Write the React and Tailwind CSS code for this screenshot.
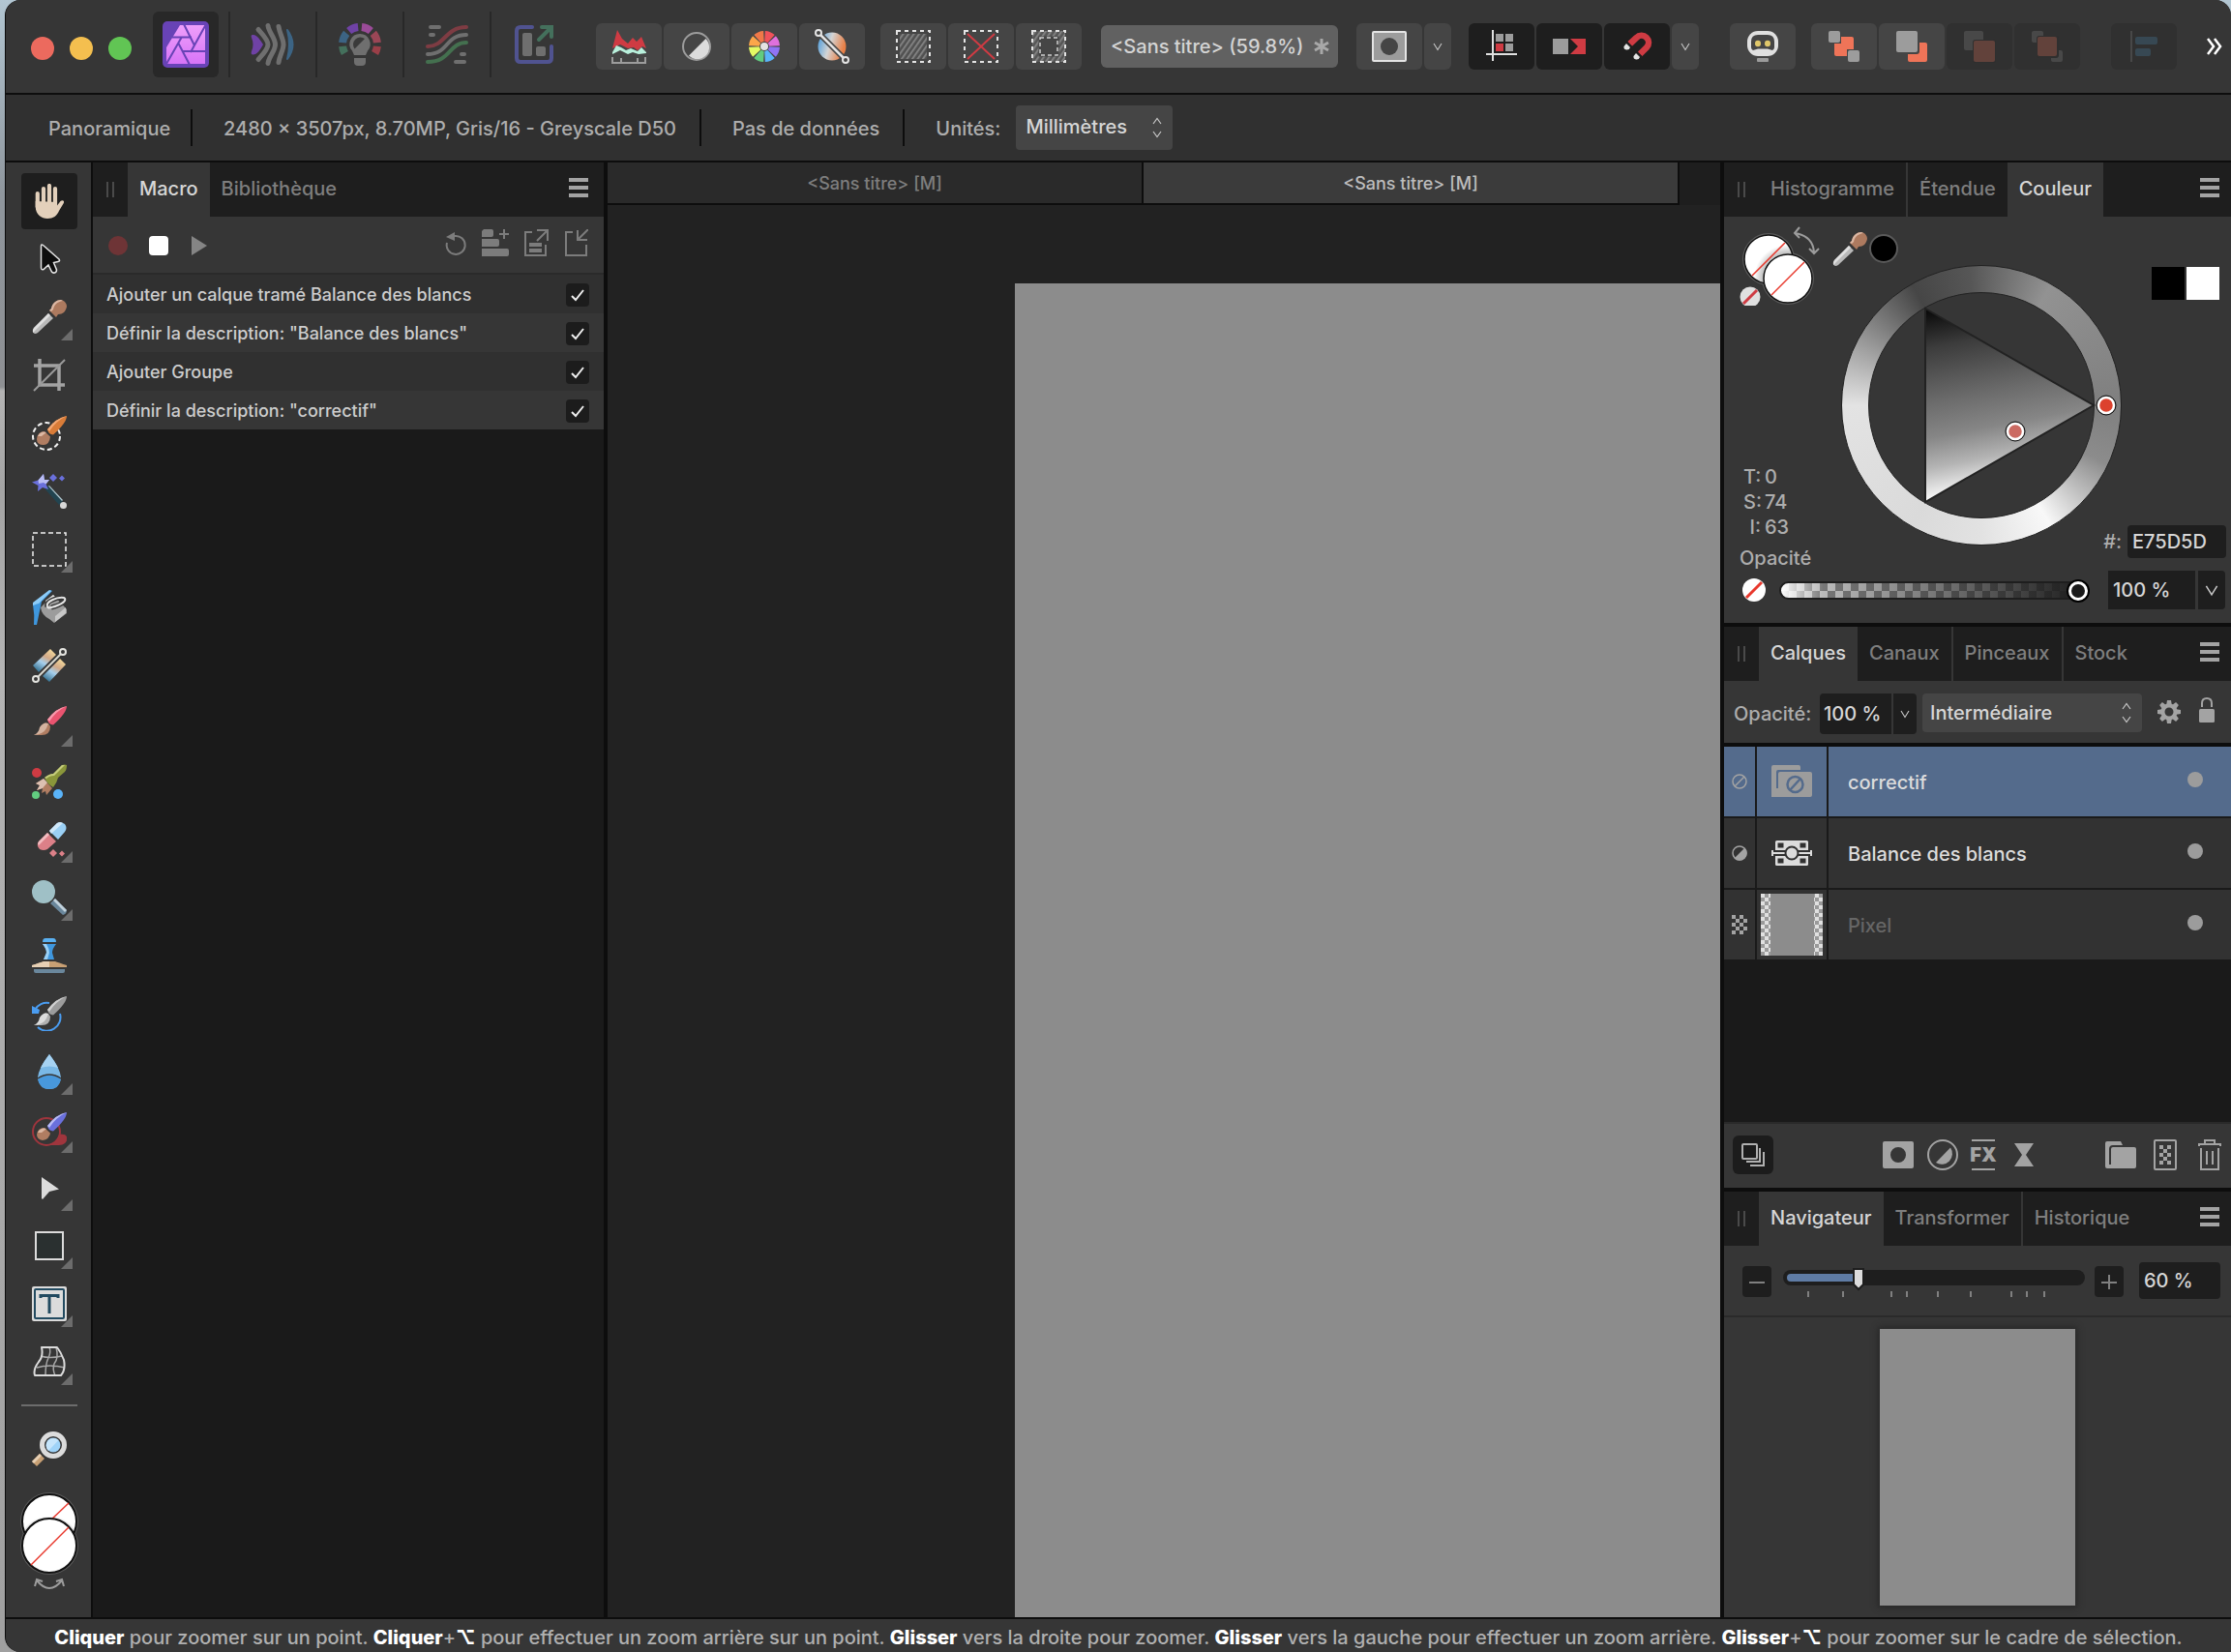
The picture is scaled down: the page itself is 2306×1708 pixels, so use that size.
import React from "react";

const Svg = ({ w = 36, h = w, children, className = "" }) => (
  <svg width={w} height={h} viewBox={`0 0 ${w} ${h}`} fill="none" className={`shrink-0 ${className}`} aria-hidden="true">
    {children}
  </svg>
);

/* ---------- persona icons ---------- */

const PhotoLogo = () => (
  <Svg w={48}>
    <defs>
      <linearGradient id="pink" x1="0" y1="0" x2="0" y2="1">
        <stop offset="0" stopColor="#ee9ffa" />
        <stop offset="1" stopColor="#d774f7" />
      </linearGradient>
    </defs>
    <rect width="48" height="48" rx="5" fill="#6843b6" />
    <path d="M18 4H44V44H4V27Z" fill="url(#pink)" />
    <g stroke="#6843b6" strokeWidth="2">
      <path d="M10 16.500H30M22 3L33 25M45 3L29 32M45 31H20M28 45L16 22M4 44L20 16" />
    </g>
  </Svg>
);

const LiquifyIcon = () => (
  <Svg w={46} h={44}>
    <path d="M2 12C6 11 10 17 13 22C10 28 6 33 2 32.500Q0 32 1 29C3 24 3 20 1 15Q0 12 2 12Z" fill="#6f42a5" />
    <g stroke="#6f6f6f" strokeWidth="5" strokeLinecap="round" strokeLinejoin="round">
      <path d="M8 6.500C12 11 18 17 18 22S12 33 8 37.500" />
      <path d="M18 2.500C19 10 25.500 15 25.500 22S19 34 18 41.500" />
      <path d="M29 3.500C30 11 34 16 34 22S30 33 29 40.500" />
    </g>
    <path d="M38 7Q49 22 38 37Q42 22 38 7Z" fill="#3c6484" stroke="#3c6484" strokeWidth="2" strokeLinejoin="round" />
  </Svg>
);

const arc = (cx, cy, r, a, b) => {
  const p = (t) => [cx + r * Math.cos((t * Math.PI) / 180), cy + r * Math.sin((t * Math.PI) / 180)].map((n) => n.toFixed(2)).join(" ");
  return `M${p(a)}A${r} ${r} 0 0 1 ${p(b)}`;
};

const DevelopIcon = () => (
  <Svg w={46} h={46}>
    {[
      ["#44705c", 150, 174],
      ["#3c6484", 186, 220],
      ["#6f42a5", 231, 264],
      ["#9a4b98", 276, 309],
      ["#9a4656", 320, 354],
      ["#9a3f48", 366, 390],
    ].map(([c, a, b]) => (
      <path key={a} d={arc(23, 23, 18, a, b)} stroke={c} strokeWidth="8" />
    ))}
    <path d="M23 12A10.500 10.500 0 0 0 15 29.500L17 34H29L31 29.500A10.500 10.500 0 0 0 23 12Z" fill="#6f6f6f" />
    <path d="M17.500 27.500A7.500 7.500 0 0 1 28 17Z" fill="#3a3a3a" />
    <path d="M17 37H29V41Q29 45 25 45H21Q17 45 17 41Z" fill="#6f6f6f" />
  </Svg>
);

const ToneIcon = () => (
  <Svg w={44} h={44}>
    <g strokeWidth="4" strokeLinecap="round">
      <path d="M2 24C20 24 20 4 42 4" stroke="#7e3c43" />
      <path d="M2 32C24 32 20 12 42 12" stroke="#6f6f6f" />
      <path d="M2 40C26 40 24 20 42 20" stroke="#44704f" />
      <path d="M5 4H14M5 12H8M37 32H40M31 40H40" stroke="#6f6f6f" />
    </g>
  </Svg>
);

const ExportIcon = () => (
  <Svg w={44} h={44}>
    <path d="M20 4H8Q4 4 4 8V36Q4 40 8 40H36Q40 40 40 36V24" stroke="#505390" strokeWidth="4" strokeLinecap="round" />
    <rect x="10" y="10" width="10" height="24" rx="2" fill="#6f6f6f" />
    <rect x="24" y="24" width="10" height="10" rx="2" fill="#6f6f6f" />
    <path d="M27 17L39 5M30 4H40V14" stroke="#44705c" strokeWidth="4" strokeLinecap="round" />
  </Svg>
);

/* ---------- main toolbar icons ---------- */

const LevelsIcon = () => (
  <Svg w={36} h={36}>
    <path d="M1 20L6 1L11 10L17 15L22 9L26 13L31 8L36 20L32 18L27 22L23 19L17 20L9 16L5 18Z" fill="#cf3b43" />
    <path d="M1 24L5 17L10 19L15 22L20 20L27 23L31 19L36 24V25L28 26L22 24L17 26L9 22L1 26Z" fill="#b9f0dc" />
    <path d="M1 29V35H35V29M10 30V34M27 30V34" stroke="#9c9c9c" strokeWidth="2" />
  </Svg>
);
const ContrastIcon = () => (
  <Svg w={32} h={32}>
    <circle cx="16" cy="16" r="14" stroke="#9c9c9c" strokeWidth="2" />
    <path d="M25.500 8A11.500 11.500 0 0 1 8 25.500Z" fill="#dcdcdc" />
  </Svg>
);
const wheelColors = ["#f0525a", "#e070dc", "#8f74f5", "#5ab4fa", "#62cc80", "#e4fa64", "#fca64a", "#f07848"];
const ColorsIcon = () => (
  <Svg w={34} h={34}>
    {wheelColors.map((c, i) => (
      <path key={c} d={arc(17, 17, 10, -90 + i * 45 + 3, -90 + i * 45 + 42)} stroke={c} strokeWidth="12" />
    ))}
    <circle cx="17" cy="17" r="5" fill="#454545" />
    <circle cx="17" cy="17" r="4" fill="#e4e4e4" />
  </Svg>
);
const BalanceIcon = () => (
  <Svg w={38} h={38}>
    <defs>
      <linearGradient id="bal" x1="0" y1="0" x2="1" y2="0.300">
        <stop offset="0" stopColor="#3f97de" />
        <stop offset="0.500" stopColor="#d4d4d4" />
        <stop offset="1" stopColor="#e87f45" />
      </linearGradient>
    </defs>
    <circle cx="19" cy="19" r="14.500" fill="url(#bal)" />
    <path d="M4 4L34 34" stroke="#454545" strokeWidth="6" />
    <path d="M6 6L32 32" stroke="#e4e4e4" strokeWidth="2.500" />
    <circle cx="5" cy="5" r="3" stroke="#e4e4e4" strokeWidth="2" fill="#454545" />
    <circle cx="33" cy="33" r="3" stroke="#e4e4e4" strokeWidth="2" fill="#454545" />
  </Svg>
);
const hatch = (id, c) => (
  <pattern id={id} width="4.500" height="4.500" patternUnits="userSpaceOnUse" patternTransform="rotate(35)">
    <rect width="2" height="5" fill={c} />
  </pattern>
);
const SelectAllIcon = () => (
  <Svg w={38} h={36}>
    <defs>{hatch("h1", "#808080")}</defs>
    <rect x="2" y="2" width="34" height="32" stroke="#e4e4e4" strokeWidth="2" strokeDasharray="4 4" />
    <rect x="5" y="5" width="28" height="26" fill="#505050" />
    <rect x="5" y="5" width="28" height="26" fill="url(#h1)" />
  </Svg>
);
const DeselectIcon = () => (
  <Svg w={38} h={36}>
    <rect x="2" y="2" width="34" height="32" stroke="#e4e4e4" strokeWidth="2" strokeDasharray="4 4" />
    <path d="M5 5L33 31M33 5L5 31" stroke="#cf3b43" strokeWidth="2" />
  </Svg>
);
const InvertSelIcon = () => (
  <Svg w={38} h={36}>
    <defs>{hatch("h2", "#808080")}</defs>
    <path d="M2 2H36V34H2Z" fill="#565656" />
    <path d="M2 2H36V34H2Z" fill="url(#h2)" />
    <rect x="2" y="2" width="34" height="32" stroke="#e4e4e4" strokeWidth="2" strokeDasharray="4 4" />
    <rect x="10" y="9" width="18" height="18" fill="#454545" stroke="#454545" strokeWidth="3" />
    <rect x="10" y="9" width="18" height="18" stroke="#d0d0d0" strokeWidth="1.500" strokeDasharray="4 3" />
  </Svg>
);
const QuickMaskIcon = () => (
  <Svg w={36} h={34}>
    <rect x="1" y="2" width="34" height="30" rx="1" fill="#9c9c9c" stroke="#e4e4e4" strokeWidth="2" />
    <circle cx="18" cy="17" r="9" fill="#454545" />
  </Svg>
);
const GridSnapIcon = () => (
  <Svg w={34} h={34}>
    <path d="M8 0V32M1 25H33" stroke="#e0e0e0" strokeWidth="2" />
    <path d="M11 4H19V12H11ZM21 4H29V12H21ZM21 14H29V22H21Z" fill="#9c9c9c" />
    <path d="M11 14H19V22H11Z" fill="#cf3b43" />
  </Svg>
);
const SnapPixelIcon = () => (
  <Svg w={34} h={20}>
    <rect x="0" y="2" width="16" height="16" fill="#9c9c9c" />
    <path d="M18 2H34V18H18L26 10Z" fill="#cf3b43" />
  </Svg>
);
const MagnetIcon = () => (
  <Svg w={34} h={34}>
    <path d="M9 15L16.500 8A7 7 0 0 1 27 18L19 26" stroke="#cf3b43" strokeWidth="6.500" />
    <path d="M6 12L12 18M16 22L22 28" stroke="#1e1e1e" strokeWidth="2" />
    <path d="M6 14L10 18Q9 21 6 20.500Q3 20 3.500 17ZM16 24L20 28Q19 31 16 30.500Q13 30 13.500 27Z" fill="#e4e4e4" />
  </Svg>
);
const BotIcon = () => (
  <Svg w={34} h={34}>
    <rect x="1" y="1" width="32" height="26" rx="11" fill="#e0e0e0" />
    <path d="M12 5H22Q29 5 29 12V18Q29 20 27 21L22 19.500H12L7 21Q5 20 5 18V12Q5 5 12 5Z" fill="#454545" />
    <ellipse cx="12" cy="14" rx="3" ry="3.200" fill="#e0c76a" />
    <ellipse cx="22" cy="14" rx="3" ry="3.200" fill="#e0c76a" />
    <rect x="11" y="29" width="12" height="4" rx="1" fill="#9c9c9c" />
  </Svg>
);
const ToBackIcon = () => (
  <Svg w={34} h={34}>
    <rect x="7" y="7" width="20" height="20" rx="2" fill="#ef7458" />
    <path d="M0 0H14V14H0ZM20 20H34V34H20Z" fill="#454545" />
    <rect x="1" y="1" width="12" height="12" rx="2" fill="#9c9c9c" />
    <rect x="21" y="21" width="12" height="12" rx="2" fill="#9c9c9c" />
  </Svg>
);
const BackwardIcon = () => (
  <Svg w={34} h={34}>
    <rect x="13" y="13" width="20" height="20" rx="2" fill="#ef7458" />
    <rect x="0" y="0" width="25" height="25" rx="3" fill="#454545" />
    <rect x="1" y="1" width="22" height="22" rx="2" fill="#9c9c9c" />
  </Svg>
);
const ForwardIcon = () => (
  <Svg w={34} h={34}>
    <rect x="1" y="1" width="20" height="20" rx="2" fill="#484848" />
    <rect x="10" y="10" width="24" height="24" rx="3" fill="#2f2f2f" />
    <rect x="11" y="11" width="22" height="22" rx="2" fill="#62423b" />
  </Svg>
);
const ToFrontIcon = () => (
  <Svg w={34} h={34}>
    <rect x="1" y="1" width="12" height="12" rx="2" fill="#484848" />
    <rect x="21" y="21" width="12" height="12" rx="2" fill="#484848" />
    <rect x="6" y="6" width="23" height="23" rx="3" fill="#2f2f2f" />
    <rect x="7" y="7" width="20" height="20" rx="2" fill="#62423b" />
  </Svg>
);
const AlignIcon = () => (
  <Svg w={34} h={34}>
    <path d="M4 1V33" stroke="#484848" strokeWidth="2" />
    <rect x="8" y="7" width="23" height="8" rx="2" fill="#374853" />
    <rect x="8" y="19" width="16" height="8" rx="2" fill="#374853" />
  </Svg>
);
const Down = ({ c = "#c8c8c8", w = 10 }) => (
  <svg width={w} height={w} viewBox="0 0 10 10" fill="none" aria-hidden="true">
    <path d="M1 2L5 8.500L9 2" stroke={c} strokeWidth="1.100" />
  </svg>
);
const UpDown = () => (
  <svg width="12" height="22" viewBox="0 0 12 22" fill="none" aria-hidden="true" className="pointer-events-none absolute top-1/2 right-2.5 -translate-y-1/2">
    <path d="M2 7L6 1.500L10 7M2 15L6 20.500L10 15" stroke="#c8c8c8" strokeWidth="1.200" />
  </svg>
);

/* ---------- tool icons, 36 x 36 ---------- */

const HandIcon = () => (
  <Svg>
    <g stroke="#e3d0bb" strokeWidth="4.200" strokeLinecap="round">
      <path d="M5.800 10V24M12 5V24M18 2V24M24 5V24" />
    </g>
    <path d="M3.700 18V24C4 32 10 36 16 36C22 36 26 33 28 28L32.800 20C34 17.500 31.500 16.500 29.500 18L26 22.500V19Z" fill="#e3d0bb" />
  </Svg>
);
const MoveIcon = () => (
  <Svg>
    <path d="M9.500 4.500Q9.500 2 11.500 3.500L28 18Q29.500 20 27 20.500L22.500 21.500L25.500 29Q25.500 31.500 23.500 32Q21.500 32.500 20.500 31L17 24L12 28.500Q9.500 29.500 9.500 26.500Z" fill="#0d0d0d" stroke="#e4e4e4" strokeWidth="1.500" />
  </Svg>
);
const Dropper = ({ s = 36 }) => (
  <svg width={s} height={s} viewBox="0 0 36 36" fill="none" aria-hidden="true">
    <path d="M17 14L22 19L6 34Q3 36 1.500 34Q0 32 2 29Z" fill="#b9b9b9" />
    <path d="M17 14L19 16L3 32L1.500 34Q0 32 2 29Z" fill="#e0e0e0" />
    <path d="M18 11L20 9C21 3 26 0 30 0C34 1 36 4 36 7C35 12 32 15 27 15L25 18Z" fill="#ad7a5f" />
    <path d="M18 11L20 9C21 3 26 0 30 0L32 1C26 2 23 5 22 10L20 12Z" fill="#dcb8a4" />
  </svg>
);
const CropIcon = () => (
  <Svg>
    <path d="M8 1V28H34M2 8H28V34" stroke="#a3a3a3" strokeWidth="3.500" />
    <path d="M2 34L34 2" stroke="#9a9a9a" strokeWidth="2" />
  </Svg>
);
const Handle = ({ a, b }) => (
  <>
    <path d="M16 14Q25 2 36 0Q36 7 22 19.500Q17 19 16 14Z" fill={a} />
    <path d="M16 14Q25 2 36 0Q25 5 18 16Z" fill={b} />
  </>
);
const SelBrushIcon = () => (
  <Svg>
    <circle cx="15" cy="21" r="14" stroke="#f0f0f0" strokeWidth="2" strokeDasharray="5 3" />
    <path d="M13 16L19 21.500Q18 30 12 30Q5 30 5 24Q6 16 13 16Z" fill="#b07d62" />
    <path d="M6 21Q9 15 15 17L10 21Z" fill="#dcb8a4" />
    <Handle a="#d97c38" b="#f3a873" />
  </Svg>
);
const WandIcon = () => (
  <Svg>
    <path d="M13 15L17 12L32 28L28 32Z" fill="#224450" />
    <path d="M17 12.500L18 12L32 27L31 28Z" fill="#b0c8d0" />
    <circle cx="32.500" cy="32.500" r="3.500" fill="#d8d8d8" />
    <path d="M12 0L13 6H18L14.500 10.500L17 16L11 14L6 18L6.500 12L0 8.500L6.500 6.500Z" fill="#6a70dc" />
    <path d="M12 0L13 6H18L14.500 10.500L12 9L7 10L6.500 6.500Z" fill="#b9bdf5" />
    <path d="M22 0L26 4L22 8L18 4ZM31 1.500L34 4.500L31 7.500L28 4.500Z" fill="#6a70dc" />
  </Svg>
);
const MarqueeIcon = () => (
  <Svg>
    <rect x="1" y="1" width="34" height="34" stroke="#f0f0f0" strokeWidth="1.500" strokeDasharray="5 3" />
  </Svg>
);
const BucketIcon = () => (
  <Svg>
    <path d="M1 15L19 0L21 1L10 12L5 36H2Q3 26 1 15Z" fill="#3f97de" />
    <path d="M1 13L18 0L20 1L7 14Q6 14 1 16Z" fill="#8ccbf8" />
    <path d="M9 18L22 5L36 20V24L23 34L18 30Q10 26 9 18Z" fill="#9c9c9c" />
    <path d="M14 11L22 5L26 9L17 17Z" fill="#e0e0e0" />
    <path d="M24 27L35 18V24L24 33Z" fill="#c8c8c8" />
    <path d="M16 17C14 12 26 7 33 8C37 10 32 15 20 18" stroke="#363636" strokeWidth="5" />
    <path d="M16 17C14 12 26 7 33 8C37 10 32 15 20 18C17 19 16 18 16 17" stroke="#e4e4e4" strokeWidth="2" />
  </Svg>
);
const GradientIcon = () => (
  <Svg>
    <defs>
      <linearGradient id="grd" x1="0.200" y1="1" x2="0.800" y2="0">
        <stop offset="0" stopColor="#2a6888" />
        <stop offset="0.400" stopColor="#a6cfec" />
        <stop offset="0.650" stopColor="#d2a988" />
        <stop offset="1" stopColor="#f5dc9c" />
      </linearGradient>
    </defs>
    <path d="M1 18L19 1L25 7L7 25Z" fill="url(#grd)" />
    <path d="M11 29L29 11L35 17L18 35Z" fill="url(#grd)" />
    <path d="M4 32L32 4" stroke="#363636" strokeWidth="5" />
    <path d="M6 30L30 6" stroke="#d8d8d0" strokeWidth="2" />
    <circle cx="32" cy="4" r="3" fill="#363636" stroke="#e4e4e0" strokeWidth="2" />
    <circle cx="4" cy="32" r="3" fill="#363636" stroke="#e4e4e0" strokeWidth="2" />
  </Svg>
);
const BrushIcon = ({ a = "#ea5470", b = "#f79aac", c = "#b07d62", d = "#d4b3a0" }) => (
  <>
    <path d="M2 30Q7 29 9 22Q12 16 17 18L19 21Q19 30 10 30Z" fill={c} />
    <path d="M2 30Q7 28 8 22Q12 16 17 18L15 23Q12 29 2 30Z" fill={d} />
    <Handle a={a} b={b} />
  </>
);
const PaintMixIcon = () => (
  <Svg>
    <circle cx="5" cy="9" r="5" fill="#cf3b43" />
    <circle cx="4" cy="32" r="4" fill="#62cc80" />
    <circle cx="27" cy="31" r="5" fill="#5ab4fa" />
    <path d="M4 20L12 15L21 25L15 32L14 28L10 30L11 25L5 27L8 22Z" fill="#b07d62" />
    <path d="M4 20L12 15L16 19L11 25L5 27L8 22Z" fill="#dcc0b2" />
    <path d="M13 14Q18 10 22 10L31 1Q34 0 36 1Q36 6 34 8L27 14Q26 19 22 24Q16 21 13 14Z" fill="#8a963a" />
    <path d="M13 14Q18 10 22 10L31 1L34 1L23 12Q18 12 15 15Z" fill="#c4cc7c" />
  </Svg>
);
const EraserIcon = () => (
  <Svg>
    <path d="M18 9L26 1Q30-1 34 2Q37 6 34 10L27 18Z" fill="#9ad0f5" />
    <path d="M18 9L26 1Q29-1 32 1L20 12Z" fill="#cfe8fa" />
    <path d="M16 11L25 20L16 28Q12 30 8 28Q4 24 7 20Z" fill="#dc8088" />
    <path d="M16 11L18 13L7 24L6 22L7 20Z" fill="#f2bcc0" />
    <path d="M22 28L26 32L22 36L18 32ZM31 29.500L34 32.500L31 35.500L28 32.500Z" fill="#dc8088" />
  </Svg>
);
const DodgeIcon = () => (
  <Svg>
    <circle cx="12" cy="12" r="12" fill="#9fc0c6" />
    <path d="M19 24L24 19L36 31Q36 35 32 36Z" fill="#6a879c" />
    <path d="M22 21L24 19L36 31L34 33Z" fill="#c2d2dc" />
  </Svg>
);
const CloneIcon = () => (
  <Svg>
    <path d="M11 4Q11 0 14 0H22Q25 0 25 4Z" fill="#5ab0f0" />
    <path d="M11 6H25Q21 11 21 15L23 22H12L15 15Q15 11 11 6Z" fill="#3f97de" />
    <path d="M11 6H15Q18 11 18 15L16 22H12L15 15Q15 11 11 6Z" fill="#9ad0f5" />
    <path d="M0 28Q9 25 12 24H24Q27 25 36 28V30H0Z" fill="#c8a074" />
    <path d="M0 28Q9 25 12 24H18V30H0Z" fill="#e6cfb4" />
    <path d="M2 32H34V34Q34 36 32 36H4Q2 36 2 34Z" fill="#6a879c" />
  </Svg>
);
const UndoBrushIcon = () => (
  <Svg>
    <path d="M18 7A14 14 0 0 0 3 14M29 18A14 14 0 0 1 6 32" stroke="#4a9cf0" strokeWidth="2" />
    <path d="M0 10L8 14L7 18L0 18Z" fill="#4a9cf0" />
    <BrushIcon a="#9c9c9c" b="#d0d0d0" c="#b0b0b0" d="#dcdcdc" />
  </Svg>
);
const BlurIcon = () => (
  <Svg>
    <path d="M18 0Q29 14 30 24Q28 36 18 36T6 24Q7 14 18 0Z" fill="#7ab8e6" />
    <path d="M18 0Q24 8 27 14Q18 11 9 14Q12 8 18 0Z" fill="#a6d2f2" />
    <path d="M6 26Q18 17 30 26Q28 36 18 36T6 26Z" fill="#4898dc" />
    <path d="M6 25Q18 17 30 25" stroke="#363636" strokeWidth="1.500" />
  </Svg>
);
const InpaintIcon = () => (
  <Svg>
    <path d="M26 12Q30 18 28 23Q36 22 36 27Q36 33 28 33H14" fill="#9f353d" />
    <circle cx="15" cy="20" r="14" fill="#363636" stroke="#9f353d" strokeWidth="2" />
    <path d="M28 23Q36 22 36 27Q36 34 28 34H15Q25 32 28 23Z" fill="#9f353d" />
    <path d="M13 16L19 21.500Q18 28 11 29Q5 28 5 23Q6 16 13 16Z" fill="#b07d62" />
    <path d="M6 21Q9 15 15 17L10 21Z" fill="#dcb8a4" />
    <Handle a="#6a70dc" b="#b9bdf5" />
  </Svg>
);
const NodeIcon = () => (
  <Svg>
    <path d="M10 7L28 19.500L18 22L11 30L10 29Z" fill="#dcdcdc" />
  </Svg>
);
const RectIcon = () => (
  <Svg>
    <rect x="4" y="4" width="28" height="28" fill="#2a3030" stroke="#dcdcdc" strokeWidth="2" />
  </Svg>
);
const TextIcon = () => (
  <Svg>
    <rect x="0" y="0" width="36" height="36" rx="2" fill="#dcdcdc" />
    <rect x="3" y="3" width="30" height="30" rx="1" stroke="#224a60" strokeWidth="2" />
    <path d="M9 12V9.500H27V12M18 9V28" stroke="#224a60" strokeWidth="3" />
  </Svg>
);
const MeshIcon = () => (
  <Svg>
    <path d="M18 3Q20 8 17 14Q14 20 14 32M25 3Q28 14 23 20Q21 26 24 32M9 12Q18 15 31 12M5 24Q18 20 34 24" stroke="#a8a8a8" strokeWidth="1.500" />
    <path d="M10 3H26Q30 8 33 16Q35 26 30 32H3Q1 26 7 18Q12 12 10 3Z" stroke="#dcdcdc" strokeWidth="2" strokeLinejoin="round" />
  </Svg>
);
const ZoomIcon = () => (
  <Svg>
    <path d="M0 31L8 23L13 28L5 36Z" fill="#c8a074" />
    <path d="M0 31L8 23L10 25L2 33Z" fill="#e6cfb4" />
    <circle cx="22" cy="14" r="11.500" stroke="#dcdcdc" strokeWidth="5" fill="#363636" />
    <circle cx="22" cy="14" r="7.500" fill="#9fd3f8" />
    <path d="M17 20A7.500 7.500 0 0 1 27.500 9Z" fill="#c6e5fb" />
  </Svg>
);

const tools = [
  ["Panoramique", HandIcon, 0],
  ["Déplacement", MoveIcon, 0],
  ["Pipette", Dropper, 1],
  ["Recadrage", CropIcon, 0],
  ["Pinceau de sélection", SelBrushIcon, 0],
  ["Sélection par dispersion", WandIcon, 0],
  ["Cadre de sélection", MarqueeIcon, 1],
  ["Remplissage", BucketIcon, 0],
  ["Dégradé", GradientIcon, 0],
  ["Pinceau", () => <Svg><BrushIcon /></Svg>, 1],
  ["Mélangeur", PaintMixIcon, 0],
  ["Gomme", EraserIcon, 1],
  ["Densité", DodgeIcon, 1],
  ["Clonage", CloneIcon, 0],
  ["Pinceau d'annulation", UndoBrushIcon, 0],
  ["Flou", BlurIcon, 1],
  ["Correction", InpaintIcon, 1],
  ["Noeud", NodeIcon, 1],
  ["Rectangle", RectIcon, 1],
  ["Texte", TextIcon, 1],
  ["Maillage", MeshIcon, 1],
];

/* ---------- shared pieces ---------- */

const ToolbarButton = ({ label, tone = "normal", children }) => (
  <button
    aria-label={label}
    className={`flex h-12 w-[68px] shrink-0 items-center justify-center rounded-md ${
      tone === "dark" ? "bg-[#1e1e1e]" : tone === "off" ? "bg-[#303030]" : "bg-[#454545]"
    }`}
  >
    {children}
  </button>
);
const DropButton = ({ label }) => (
  <button aria-label={label} className="flex h-12 w-7 shrink-0 items-center justify-center rounded-md bg-[#454545]">
    <Down />
  </button>
);
const PanelTabs = ({ tabs, active, menu = "mr-3" }) => (
  <div className="flex h-14 shrink-0 items-center bg-[#1e1e1e]" role="tablist">
    <span className="flex h-4 w-9 shrink-0 justify-center gap-1">
      <span className="w-0.5 bg-[#4a4a4a]" />
      <span className="w-0.5 bg-[#4a4a4a]" />
    </span>
    {tabs.map((t, i) => (
      <button
        key={t}
        role="tab"
        aria-selected={i === active}
        className={`h-14 px-3 pb-0.5 text-[20px] font-medium ${
          i === active ? "bg-[#363636] text-[#d6d6d6]" : "text-[#7e7e7e]"
        } ${i !== active && i + 1 !== active && i < tabs.length - 1 ? "border-r-2 border-[#363636]" : ""}`}
      >
        {t}
      </button>
    ))}
    <button aria-label="Menu du panneau" className={`mb-1 ml-auto flex flex-col gap-1 ${menu}`}>
      <span className="h-1 w-5 bg-[#a3a3a3]" />
      <span className="h-1 w-5 bg-[#a3a3a3]" />
      <span className="h-1 w-5 bg-[#a3a3a3]" />
    </button>
  </div>
);

const NoneDisc = ({ s, c = "#e8382d", bg = "#fff", w = 2 }) => (
  <svg width={s} height={s} viewBox="0 0 24 24" aria-hidden="true" className="shrink-0">
    <circle cx="12" cy="12" r="12" fill={bg} />
    <path d="M4 20L20 4" stroke={c} strokeWidth={w} />
  </svg>
);

/* ---------- bars ---------- */

const personas = [
  ["Photo", PhotoLogo],
  ["Fluidité", LiquifyIcon],
  ["Développement", DevelopIcon],
  ["Mappage tonal", ToneIcon],
  ["Exportation", ExportIcon],
];

const Toolbar = () => (
  <header className="flex h-[98px] shrink-0 items-center border-b-2 border-[#0d0d0d] bg-[#363636] pr-2 pl-[26px]">
    <div className="mt-1 flex gap-4">
      <button aria-label="Fermer" className="h-6 w-6 rounded-full bg-[#ec6a5e]" />
      <button aria-label="Réduire" className="h-6 w-6 rounded-full bg-[#f4bf4f]" />
      <button aria-label="Agrandir" className="h-6 w-6 rounded-full bg-[#61c554]" />
    </div>
    <nav className="mb-1 ml-[22px] flex gap-2.5">
      {personas.map(([n, I], i) => (
        <React.Fragment key={n}>
          {i > 0 && <span className="w-0.5 bg-[#282828]" />}
          <button aria-label={n} className={`flex h-[68px] w-[68px] items-center justify-center rounded-md ${i === 0 ? "bg-[#282828]" : ""}`}>
            <I />
          </button>
        </React.Fragment>
      ))}
    </nav>
    <div className="ml-[30px] flex gap-0.5">
      <ToolbarButton label="Niveaux auto"><LevelsIcon /></ToolbarButton>
      <ToolbarButton label="Contraste auto"><ContrastIcon /></ToolbarButton>
      <ToolbarButton label="Couleurs auto"><ColorsIcon /></ToolbarButton>
      <ToolbarButton label="Balance auto"><BalanceIcon /></ToolbarButton>
    </div>
    <div className="ml-4 flex gap-0.5">
      <ToolbarButton label="Tout sélectionner"><SelectAllIcon /></ToolbarButton>
      <ToolbarButton label="Désélectionner"><DeselectIcon /></ToolbarButton>
      <ToolbarButton label="Inverser la sélection"><InvertSelIcon /></ToolbarButton>
    </div>
    <div className="ml-5 flex h-11 w-[245px] shrink-0 items-center justify-between rounded-md bg-[#616161] pr-2 pl-2.5 text-[20px] font-medium whitespace-nowrap text-[#d4d4d4]">
      <span>&lt;Sans titre&gt; (59.8%)</span>
      <Svg w={18}>
        <path d="M9 1V17M2 5L16 13M16 5L2 13" stroke="#a8a8a8" strokeWidth="3" />
      </Svg>
    </div>
    <div className="ml-[19px] flex gap-0.5">
      <ToolbarButton label="Masque rapide"><QuickMaskIcon /></ToolbarButton>
      <DropButton label="Options du masque" />
    </div>
    <div className="ml-[18px] flex gap-0.5">
      <ToolbarButton label="Alignement sur grille" tone="dark"><GridSnapIcon /></ToolbarButton>
      <ToolbarButton label="Déplacer par pixels" tone="dark"><SnapPixelIcon /></ToolbarButton>
      <ToolbarButton label="Magnétisme" tone="dark"><MagnetIcon /></ToolbarButton>
      <DropButton label="Options de magnétisme" />
    </div>
    <div className="ml-8 flex"><ToolbarButton label="Assistant"><BotIcon /></ToolbarButton></div>
    <div className="ml-4 flex gap-0.5">
      <ToolbarButton label="Arrière-plan"><ToBackIcon /></ToolbarButton>
      <ToolbarButton label="Reculer"><BackwardIcon /></ToolbarButton>
      <ToolbarButton label="Avancer" tone="off"><ForwardIcon /></ToolbarButton>
      <ToolbarButton label="Premier plan" tone="off"><ToFrontIcon /></ToolbarButton>
    </div>
    <div className="ml-8 flex"><ToolbarButton label="Alignement" tone="off"><AlignIcon /></ToolbarButton></div>
    <button aria-label="Plus" className="ml-auto">
      <Svg w={18} h={20}>
        <path d="M2 2L8 10L2 18M9 2L15 10L9 18" stroke="#fff" strokeWidth="2.500" />
      </Svg>
    </button>
  </header>
);

const ContextBar = () => (
  <div className="flex h-[70px] shrink-0 items-center border-b-2 border-[#0d0d0d] bg-[#303030] pl-11 text-[20px] font-medium whitespace-nowrap text-[#adadad]">
    <span className="w-[125px] pt-0.5">Panoramique</span>
    <span className="mr-6 ml-[22px] h-[38px] w-0.5 bg-[#0d0d0d]" />
    <span className="ml-2 pt-0.5">2480 × 3507px, 8.70MP, Gris/16 - Greyscale D50</span>
    <span className="mx-6 h-[38px] w-0.5 bg-[#0d0d0d]" />
    <span className="ml-2 pt-0.5">Pas de données</span>
    <span className="mx-6 h-[38px] w-0.5 bg-[#0d0d0d]" />
    <label htmlFor="units" className="ml-2 pt-0.5">Unités:</label>
    <span className="relative ml-4 block">
      <select id="units" className="block h-[46px] w-[162px] appearance-none rounded bg-[#454545] pb-0.5 pl-2.5 text-[20px] font-medium text-[#d6d6d6]">
        <option>Millimètres</option>
      </select>
      <UpDown />
    </span>
  </div>
);

const ToolStrip = () => (
  <aside className="flex w-[90px] shrink-0 flex-col items-center border-r-2 border-[#0d0d0d] bg-[#363636] pt-2.5 pl-px">
    {tools.map(([name, I, more], i) => (
      <div key={name} className="flex h-[60px] items-center">
        <button aria-label={name} className={`flex h-[58px] w-[58px] items-center justify-center rounded ${i === 0 ? "bg-[#1e1e1e]" : ""}`}>
          <span className="relative flex h-12 w-12 items-center justify-center">
            <I />
            {more ? (
              <svg width="12" height="12" viewBox="0 0 12 12" className="absolute right-0 bottom-0" aria-hidden="true">
                <path d="M12 0V12H0Z" fill="#6c6c6c" />
              </svg>
            ) : null}
          </span>
        </button>
      </div>
    ))}
    <span className="mt-[14px] h-0.5 w-[58px] bg-[#6c6c6c]" />
    <button aria-label="Zoom" className="mt-[26px]"><ZoomIcon /></button>
    <button aria-label="Couleurs" className="mt-[25px]">
      <Svg w={64} h={108}>
        <defs>
          <radialGradient id="sh" cx="0.500" cy="1" r="0.600">
            <stop offset="0.700" stopColor="#777" />
            <stop offset="1" stopColor="#fff" />
          </radialGradient>
        </defs>
        <circle cx="32" cy="32" r="30" fill="#5a5a5a" />
        <circle cx="32" cy="57" r="30" fill="#5a5a5a" />
        <circle cx="32" cy="32" r="28" fill="url(#sh)" stroke="#111" strokeWidth="2" />
        <path d="M32 32L52 13" stroke="#e8382d" strokeWidth="1.500" />
        <circle cx="32" cy="57" r="28" fill="#fff" stroke="#111" strokeWidth="2" />
        <path d="M13 77L52 38" stroke="#e8382d" strokeWidth="1.500" />
        <path d="M19 93Q32 109 45 93M17 99L19 92L25 94M47 99L45 92L39 94" stroke="#9c9c9c" strokeWidth="2" />
      </Svg>
    </button>
  </aside>
);

const macroSteps = [
  "Ajouter un calque tramé Balance des blancs",
  'Définir la description: "Balance des blancs"',
  "Ajouter Groupe",
  'Définir la description: "correctif"',
];

const MacroPanel = () => (
  <section className="flex w-[532px] shrink-0 flex-col border-r-4 border-[#0d0d0d] bg-[#1a1a1a]">
    <PanelTabs tabs={["Macro", "Bibliothèque"]} active={0} menu="mr-4" />
    <div className="flex h-[60px] shrink-0 items-center border-b-2 border-[#2a2a2a] bg-[#363636] pr-4 pl-4">
      <button aria-label="Enregistrer" className="mt-0.5 h-5 w-5 rounded-full bg-[#6e3436]" />
      <button aria-label="Arrêter" className="mt-0.5 ml-[22px] h-5 w-5 rounded bg-white" />
      <button aria-label="Lire" className="mt-0.5 ml-6">
        <Svg w={16} h={20}><path d="M0 0L16 10L0 20Z" fill="#858585" /></Svg>
      </button>
      <div className="mb-1 ml-auto flex items-center gap-4">
        <button aria-label="Réinitialiser">
          <Svg w={22} h={28}>
            <path d="M10 7A9.500 9.500 0 1 1 2 14" stroke="#7c7c7c" strokeWidth="2" />
            <path d="M1 8L10 3V12Z" fill="#7c7c7c" />
          </Svg>
        </button>
        <button aria-label="Ajouter à la bibliothèque">
          <Svg w={28} h={28}>
            <path d="M2 0H10Q12 0 12 2V6Q12 8 10 8H0V2ZM0 10H16Q18 10 18 12V16Q18 18 16 18H0ZM0 20H26Q28 20 28 22V26Q28 28 26 28H0Z" fill="#7c7c7c" />
            <path d="M23 0V10M18 5H28" stroke="#7c7c7c" strokeWidth="2" />
          </Svg>
        </button>
        <button aria-label="Exporter">
          <Svg w={26} h={28}>
            <path d="M8 3H1V27H22V16M13 1H24V12M24 1L13 12" stroke="#7c7c7c" strokeWidth="2" />
            <path d="M5 14H18V18H5ZM5 20H18V24H5Z" fill="#7c7c7c" />
          </Svg>
        </button>
        <button aria-label="Importer">
          <Svg w={24} h={28}>
            <path d="M8 3H1V27H22V16M13 1V11H23M24 0L13 11" stroke="#7c7c7c" strokeWidth="2" />
          </Svg>
        </button>
      </div>
    </div>
    {macroSteps.map((t, i) => (
      <label key={t} className={`flex h-10 shrink-0 items-center justify-between pr-[15px] pl-3.5 text-[18px] font-medium text-[#cdcdcd] ${i % 2 ? "bg-[#363636]" : "bg-[#303030]"}`}>
        <span>{t}</span>
        <span className="relative mt-0.5 block h-6 w-6">
          <input type="checkbox" defaultChecked className="block h-6 w-6 appearance-none rounded bg-[#1c1c1c]" />
          <svg width="24" height="24" viewBox="0 0 24 24" fill="none" className="pointer-events-none absolute top-0 left-0" aria-hidden="true">
            <path d="M6 13L10 17L18 7" stroke="#f0f0f0" strokeWidth="2" />
          </svg>
        </span>
      </label>
    ))}
  </section>
);

const docTab = "h-11 w-[554px] min-w-0 border-r-2 border-b-2 border-[#0d0d0d]";

const Document = () => (
  <main className="flex min-w-0 flex-1 flex-col bg-[#222]">
    <div className="flex h-11 shrink-0 bg-[#1e1e1e] text-[18px] font-medium" role="tablist">
      <button role="tab" aria-selected="false" className={`${docTab} bg-[#2a2a2a] text-[#7e7e7e]`}>
        &lt;Sans titre&gt; [M]
      </button>
      <button role="tab" aria-selected="true" className={`${docTab} bg-[#3b3b3b] text-[#bdbdbd]`}>
        &lt;Sans titre&gt; [M]
      </button>
    </div>
    <div className="flex flex-1 pt-[81px] pl-[421px]">
      <div className="flex-1 bg-[#8c8c8c]" />
    </div>
  </main>
);

const ColorWheel = () => (
  <div className="relative h-[290px] w-[290px] shrink-0">
    <div className="h-full w-full rounded-full border border-[#222] bg-[conic-gradient(from_30deg,#929292,#7f7f7f_60deg,#8c8c8c_85deg,#f8f8f8_120deg,#e2e2e2_150deg,#dadada_180deg,#e3e3e3_240deg,#464646_300deg,#565656_325deg,#929292_360deg)]" />
    <div className="absolute inset-[28px] rounded-full border border-[#222] bg-[#363636]" />
    <svg width="290" height="290" viewBox="0 0 290 290" fill="none" className="absolute inset-0" role="img" aria-label="Roue chromatique">
      <defs>
        <linearGradient id="tri" gradientUnits="userSpaceOnUse" x1="87" y1="45" x2="125" y2="245">
          <stop offset="0" stopColor="#060606" />
          <stop offset="0.200" stopColor="#3c3c3c" />
          <stop offset="0.480" stopColor="#6c6c6c" />
          <stop offset="0.650" stopColor="#868686" />
          <stop offset="0.800" stopColor="#b4b4b4" />
          <stop offset="0.960" stopColor="#fafafa" />
        </linearGradient>
      </defs>
      <path d="M87 45L261 145L87 245Z" fill="url(#tri)" stroke="#222" strokeWidth="2" />
      <circle cx="274" cy="145" r="8" fill="#dc412d" stroke="#fff" strokeWidth="2.500" />
      <circle cx="274" cy="145" r="10" stroke="#111" strokeWidth="1" />
      <circle cx="180" cy="172" r="8" fill="#cb6a62" stroke="#fff" strokeWidth="2.500" />
      <circle cx="180" cy="172" r="10" stroke="#111" strokeWidth="1" />
    </svg>
  </div>
);

const Field = ({ label, value, className }) => (
  <input aria-label={label} defaultValue={value} className={`shrink-0 bg-[#1e1e1e] text-[20px] font-medium text-[#d6d6d6] ${className}`} />
);

const ColorPanel = () => (
  <section className="flex shrink-0 flex-col border-b-4 border-[#0d0d0d] bg-[#363636] font-medium">
    <PanelTabs tabs={["Histogramme", "Étendue", "Couleur"]} active={2} />
    <div className="flex h-[50px] items-start pl-4">
      <button aria-label="Trait et remplissage">
        <Svg w={84} h={92}>
          <defs>
            <radialGradient id="sh2" cx="0.900" cy="0.900" r="0.700">
              <stop offset="0.500" stopColor="#888" />
              <stop offset="1" stopColor="#fff" />
            </radialGradient>
          </defs>
          <circle cx="30" cy="44" r="27" fill="#5a5a5a" />
          <circle cx="50" cy="64" r="27" fill="#5a5a5a" />
          <circle cx="30" cy="44" r="25" fill="url(#sh2)" stroke="#111" strokeWidth="1.500" />
          <path d="M13 61L47 27" stroke="#e8382d" strokeWidth="1.500" />
          <circle cx="50" cy="64" r="25" fill="#fff" stroke="#111" strokeWidth="1.500" />
          <path d="M33 81L67 47" stroke="#e8382d" strokeWidth="1.500" />
          <circle cx="11" cy="83" r="10.500" fill="#e0e0e0" />
          <path d="M4 90L18 76" stroke="#cf3b43" strokeWidth="3" />
          <path d="M57 17Q76 20 77 37M62 11L57 17L62 22M72 33L77 38L82 33" stroke="#9c9c9c" strokeWidth="2" />
        </Svg>
      </button>
      <button aria-label="Pipette" className="mt-4 ml-3"><Dropper s={36} /></button>
      <span className="mt-[18px] ml-0.5 h-[30px] w-[30px] rounded-full border-2 border-[#5a5a5a] bg-black" />
    </div>
    <div className="flex h-[290px] items-stretch justify-between pr-3 pl-5">
      <dl className="flex w-[101px] shrink-0 flex-col justify-end pb-1.5 text-[20px] leading-[26px] text-[#adadad]">
        <div className="flex gap-1"><dt className="w-[18px] text-right whitespace-nowrap">T:</dt><dd>0</dd></div>
        <div className="flex gap-1"><dt className="w-[18px] text-right whitespace-nowrap">S:</dt><dd>74</dd></div>
        <div className="flex gap-1"><dt className="w-[18px] text-right whitespace-nowrap">I:</dt><dd>63</dd></div>
      </dl>
      <ColorWheel />
      <div className="flex flex-1 justify-end gap-0.5 pt-0.5">
        <button aria-label="Noir" className="h-[34px] w-[34px] bg-black" />
        <button aria-label="Blanc" className="h-[34px] w-[34px] bg-white" />
      </div>
    </div>
    <div className="flex h-[26px] items-end justify-between pr-[5px] pl-4 text-[20px] text-[#adadad]">
      <span className="leading-[26px]">Opacité</span>
      <span className="mb-[13px] flex items-center gap-1.5">
        <span>#:</span>
        <Field label="Hexadécimal" value="E75D5D" className="h-[34px] w-[102px] rounded pl-[5px]" />
      </span>
    </div>
    <div className="flex h-[54px] items-start pr-1.5 pl-[19px]">
      <span className="mt-2"><NoneDisc s={24} w={3} /></span>
      <span className="relative mt-[11px] mr-[25px] ml-3.5 flex h-[19px] flex-1 items-center overflow-visible rounded-full border-2 border-[#1e1e1e] bg-[linear-gradient(to_right,#ffffff_0%,#ffffff00_14%,#00000000_14%,#1e1e1e_100%),conic-gradient(#777_25%,#bbb_0_50%,#777_0_75%,#bbb_0)] bg-size-[100%_100%,16px_16px]">
        <input type="range" aria-label="Opacité de la couleur" defaultValue="100" className="absolute inset-0 w-full opacity-0" />
        <span className="pointer-events-none absolute -top-0.5 -right-1.5 h-5 w-5 rounded-full border-[3px] border-white bg-[#1a1a1a] ring-2 ring-black" />
      </span>
      <Field label="Valeur d'opacité" value="100 %" className="h-10 w-[90px] pl-[5px]" />
      <button aria-label="Liste d'opacité" className="ml-[3px] flex h-10 w-7 shrink-0 items-center justify-center rounded-r bg-[#1e1e1e]"><Down w={14} /></button>
    </div>
  </section>
);

const GearIcon = () => (
  <Svg w={24}>
    {[0, 45, 90, 135, 180, 225, 270, 315].map((a) => (
      <path key={a} d="M10 0H14L15 6H9Z" fill="#a3a3a3" transform={`rotate(${a} 12 12)`} />
    ))}
    <circle cx="12" cy="12" r="6.500" stroke="#a3a3a3" strokeWidth="4" />
  </Svg>
);
const LockIcon = () => (
  <Svg w={16} h={26}>
    <path d="M3 10V6Q3 1 8 1T13 6V10" stroke="#a3a3a3" strokeWidth="2" />
    <rect y="12" width="16" height="14" rx="1.500" fill="#a3a3a3" />
  </Svg>
);

const Checks = ({ x, y, cols, rows, s, color }) => {
  const out = [];
  for (let r = 0; r < rows; r++)
    for (let c = 0; c < cols; c++)
      if ((r + c) % 2 === 0) out.push(<rect key={`${r}-${c}`} x={x + c * s} y={y + r * s} width={s} height={s} fill={color} />);
  return <>{out}</>;
};

const layers = [
  {
    name: "correctif",
    selected: true,
    kind: (
      <Svg w={16}>
        <circle cx="8" cy="8" r="7" stroke="#a3a3a3" strokeWidth="1.500" />
        <path d="M3 13L13 3" stroke="#a3a3a3" strokeWidth="1.500" />
      </Svg>
    ),
    thumb: (
      <Svg w={42} h={34}>
        <path d="M2 0H28Q30 0 30 2V5H7Q5 5 5 7V33H2Q0 33 0 31V2Q0 0 2 0Z" fill="#9c9c9c" />
        <path d="M5 24V33H0V24Z" fill="#9c9c9c" />
        <path d="M9 7H40Q42 7 42 9V31Q42 33 40 33H5V24H7V9Q7 7 9 7Z" fill="#9c9c9c" />
        <circle cx="24.500" cy="20" r="8" stroke="#546b8c" strokeWidth="2.500" />
        <path d="M19 26L30 14" stroke="#546b8c" strokeWidth="2.500" />
      </Svg>
    ),
  },
  {
    name: "Balance des blancs",
    kind: (
      <Svg w={16}>
        <circle cx="8" cy="8" r="7" stroke="#a3a3a3" strokeWidth="1.500" />
        <path d="M13.500 2.500A7.500 7.500 0 0 1 2.500 13.500Z" fill="#a3a3a3" />
      </Svg>
    ),
    thumb: (
      <Svg w={42} h={28}>
        <rect x="4" y="1" width="34" height="26" rx="1.500" fill="#dcdcdc" />
        <path d="M6.500 3.500H12.500V8.500H6.500ZM29.500 3.500H35.500V8.500H29.500ZM6.500 19.500H12.500V24.500H6.500ZM29.500 19.500H35.500V24.500H29.500Z" fill="#303030" />
        <path d="M0 14H42" stroke="#303030" strokeWidth="6" />
        <path d="M0 14H42M1 11V17M41 11V17" stroke="#dcdcdc" strokeWidth="2" />
        <circle cx="21" cy="14" r="6.500" fill="#dcdcdc" stroke="#303030" strokeWidth="2" />
      </Svg>
    ),
  },
  {
    name: "Pixel",
    dim: true,
    kind: (
      <Svg w={16} h={20}>
        <Checks x={0} y={0} cols={4} rows={5} s={4} color="#a3a3a3" />
      </Svg>
    ),
    thumb: (
      <Svg w={64}>
        <rect width="64" height="64" fill="#e0e0e0" />
        <Checks x={-4} y={0} cols={16} rows={16} s={4} color="#9a9a9a" />
        <Checks x={60} y={0} cols={1} rows={16} s={4} color="#9a9a9a" />
        <rect x="10" width="45" height="64" fill="#8c8c8c" />
      </Svg>
    ),
  },
];

const LayersPanel = () => (
  <section className="flex min-h-0 flex-1 flex-col border-b-4 border-[#0d0d0d] bg-[#1a1a1a] font-medium">
    <PanelTabs tabs={["Calques", "Canaux", "Pinceaux", "Stock"]} active={0} />
    <div className="flex h-[68px] shrink-0 items-start border-b-4 border-[#0d0d0d] bg-[#363636] pt-[13px] pr-[17px] pl-2.5">
      <label htmlFor="layer-opacity" className="w-[89px] shrink-0 pt-1.5 text-[20px] text-[#adadad]">Opacité:</label>
      <input id="layer-opacity" defaultValue="100 %" className="h-[42px] w-[74px] shrink-0 rounded-l bg-[#1e1e1e] pl-1 text-[20px] text-[#d6d6d6]" />
      <button aria-label="Liste d'opacité du calque" className="ml-0.5 flex h-[42px] w-6 shrink-0 items-center justify-center rounded-r bg-[#1e1e1e]"><Down /></button>
      <span className="relative ml-1.5 flex-1">
        <select aria-label="Mode de fusion" className="block h-10 w-full appearance-none rounded bg-[#454545] pl-2 text-[20px] text-[#d6d6d6]">
          <option>Intermédiaire</option>
        </select>
        <UpDown />
      </span>
      <button aria-label="Options de fusion" className="mt-[7px] ml-4"><GearIcon /></button>
      <button aria-label="Verrouiller" className="mt-1 ml-[19px]"><LockIcon /></button>
    </div>
    <ul className="flex flex-col gap-0.5">
      {layers.map((l) => (
        <li key={l.name} className={`flex h-[72px] items-stretch text-[20px] ${l.selected ? "bg-[#546b8c]" : "bg-[#323232]"}`}>
          <span className="flex w-[34px] shrink-0 items-center justify-center border-r-2 border-[#1a1a1a]">{l.kind}</span>
          <span className="flex w-[74px] shrink-0 items-center justify-center border-r-2 border-[#1a1a1a]">{l.thumb}</span>
          <span className={`flex flex-1 items-center pt-0.5 pl-5 ${l.dim ? "text-[#666]" : "text-[#dcdcdc]"}`}>{l.name}</span>
          <button aria-label={`Visibilité ${l.name}`} className="mt-[26px] mr-[29px] h-4 w-4 rounded-full bg-[#9c9c9c]" />
        </li>
      ))}
    </ul>
    <div className="mt-auto flex h-[68px] shrink-0 items-center border-t-2 border-[#2a2a2a] bg-[#363636] pr-2.5 pb-0.5 pl-[9px]">
      <button aria-label="Pile de calques" className="flex h-10 w-[42px] items-center justify-center rounded-md bg-[#1c1c1c]">
        <Svg w={26}>
          <rect x="2" y="2" width="15" height="15" rx="1" stroke="#b0b0b0" strokeWidth="2" />
          <path d="M20 6V20H6M24 10V24H10" stroke="#b0b0b0" strokeWidth="2" />
        </Svg>
      </button>
      <div className="mr-[74px] ml-auto flex items-center">
        <button aria-label="Masque">
          <Svg w={32} h={28}>
            <path d="M2 0H30Q32 0 32 2V26Q32 28 30 28H2Q0 28 0 26V2Q0 0 2 0ZM16 6A8 8 0 1 0 16 22A8 8 0 1 0 16 6Z" fill="#a3a3a3" fillRule="evenodd" />
          </Svg>
        </button>
        <button aria-label="Réglage" className="ml-3.5">
          <Svg w={32}>
            <circle cx="16" cy="16" r="15" stroke="#a3a3a3" strokeWidth="2" />
            <path d="M24 8.500A11 11 0 0 1 9 24Z" fill="#a3a3a3" />
          </Svg>
        </button>
        <button aria-label="Effets" className="ml-3.5 flex w-6 justify-center border-y-2 border-[#a3a3a3] text-[20px] leading-7 font-black text-[#a3a3a3]">
          <span>FX</span>
        </button>
        <button aria-label="Filtre dynamique" className="ml-5">
          <Svg w={20} h={24}><path d="M0 0H20L12 12L20 24H0L8 12Z" fill="#a3a3a3" /></Svg>
        </button>
      </div>
      <button aria-label="Grouper">
        <Svg w={32} h={28}>
          <path d="M2 0H16L18 4H8Q4 4 4 8V24H6V8Q6 6 8 6H30Q32 6 32 8V26Q32 28 30 28H2Q0 28 0 26V2Q0 0 2 0Z" fill="#a3a3a3" />
        </Svg>
      </button>
      <button aria-label="Calque de pixels" className="ml-[18px]">
        <Svg w={24} h={32}>
          <rect x="1" y="1" width="22" height="30" rx="1" stroke="#a3a3a3" strokeWidth="2" />
          <Checks x={6} y={6} cols={3} rows={5} s={4} color="#a3a3a3" />
        </Svg>
      </button>
      <button aria-label="Supprimer" className="ml-[22px]">
        <Svg w={24} h={32}>
          <path d="M1 7V5H23V7M7 4V1H17V4M3 9V31H21V9M9 12V26M15 12V26" stroke="#a3a3a3" strokeWidth="2" />
        </Svg>
      </button>
    </div>
  </section>
);

const ticks = [25, 61, 111, 127, 159, 193, 235, 251, 269];

const NavigatorPanel = () => (
  <section className="flex h-[440px] shrink-0 flex-col bg-[#363636]">
    <PanelTabs tabs={["Navigateur", "Transformer", "Historique"]} active={0} />
    <div className="flex h-[74px] shrink-0 items-start border-b-2 border-[#2a2a2a] pt-[17px] pr-[11px] pl-[19px]">
      <button aria-label="Zoom arrière" className="mt-1 flex h-8 w-[30px] shrink-0 items-center justify-center rounded bg-[#1e1e1e]">
        <Svg w={16}><path d="M0 9H16" stroke="#808080" strokeWidth="2" /></Svg>
      </button>
      <span className="relative mt-2 mr-2.5 ml-3 block h-4 flex-1 rounded-full bg-[#1e1e1e] p-1">
        <span className="block h-2 w-[70px] rounded-l-full bg-[#5f7ca5]" />
        <svg width="312" height="34" viewBox="0 -4 312 34" className="pointer-events-none absolute -top-1 left-0" aria-hidden="true">
          {ticks.map((x) => (
            <rect key={x} x={x} y="22" width="2" height="6" fill="#808080" />
          ))}
          <path d="M73-1H83V15L78 20L73 15Z" fill="#dcdcdc" stroke="#1e1e1e" strokeWidth="2" />
        </svg>
        <input type="range" aria-label="Niveau de zoom" defaultValue="24" className="absolute inset-0 w-full opacity-0" />
      </span>
      <button aria-label="Zoom avant" className="mt-1 flex h-8 w-[30px] shrink-0 items-center justify-center rounded bg-[#1e1e1e]">
        <Svg w={16}><path d="M0 9H16M8 1V16" stroke="#808080" strokeWidth="2" /></Svg>
      </button>
      <Field label="Pourcentage de zoom" value="60 %" className="ml-4 h-[38px] w-[84px] rounded pl-[5px]" />
    </div>
    <div className="flex flex-1 items-start justify-center pt-3">
      <div className="h-[286px] w-[202px] bg-[#8c8c8c] shadow-[0_0_6px_2px_#1e1e1e99]" />
    </div>
  </section>
);

const B = ({ children }) => <b className="font-extrabold text-white">{children}</b>;

export default function App() {
  return (
    <div className="h-screen w-full bg-[linear-gradient(#b2c6d2_0px,#8f969d_200px,#8e9093_400px,#b4b4b4_404px,#a4a4a4_505px,#b4b4b4_700px,#a0a0a0_1708px)] pl-[5px] font-['Inter','DejaVu_Sans',sans-serif]">
      <div className="flex h-full flex-col overflow-hidden rounded-l-[16px] rounded-tr-[16px] border-l border-[#0d0d0d] bg-[#363636]">
        <Toolbar />
        <ContextBar />
        <div className="flex min-h-0 flex-1">
          <ToolStrip />
          <MacroPanel />
          <Document />
          <div className="flex w-[528px] shrink-0 flex-col border-l-4 border-[#0d0d0d]">
            <ColorPanel />
            <LayersPanel />
            <NavigatorPanel />
          </div>
        </div>
        <footer className="flex h-9 shrink-0 items-center justify-center border-t-2 border-[#0d0d0d] bg-[#363636] pt-1 text-[20px] font-medium whitespace-nowrap text-[#b0b0b0]">
          <p>
            <B>Cliquer</B> pour zoomer sur un point. <B>Cliquer</B>+<B>⌥</B> pour effectuer un zoom arrière sur un point. <B>Glisser</B> vers la droite pour
            zoomer. <B>Glisser</B> vers la gauche pour effectuer un zoom arrière. <B>Glisser</B>+<B>⌥</B> pour zoomer sur le cadre de sélection.
          </p>
        </footer>
      </div>
    </div>
  );
}
